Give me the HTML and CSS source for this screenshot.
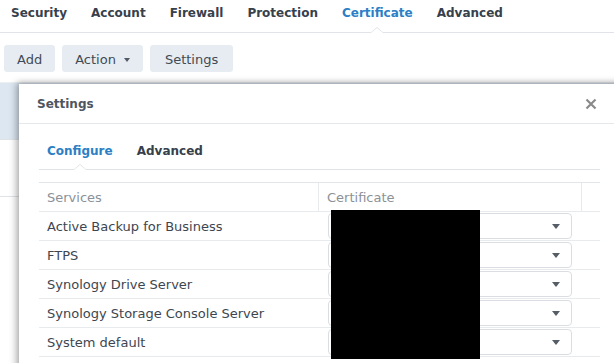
FILE: index.html
```html
<!DOCTYPE html>
<html>
<head>
<meta charset="utf-8">
<link rel="stylesheet" href="styles.css">
</head>
<body>
<div class="page">
  <nav class="tabs">
    <span class="tab">Security</span>
    <span class="tab">Account</span>
    <span class="tab">Firewall</span>
    <span class="tab">Protection</span>
    <span class="tab active">Certificate</span>
    <span class="tab">Advanced</span>
  </nav>
  <div class="toolbar">
    <button class="btn">Add</button>
    <button class="btn">Action <span class="caret"></span></button>
    <button class="btn">Settings</button>
  </div>
  <div class="grid">
    <div class="grid-row selected"></div>
    <div class="grid-row"></div>
  </div>

  <div class="dialog">
    <div class="dialog-head">
      <span class="dialog-title">Settings</span>
      <span class="close">
        <svg width="12" height="12" viewBox="0 0 12 12"><path d="M1.5 1.5 L10.5 10.5 M10.5 1.5 L1.5 10.5" stroke="#8a8a8a" stroke-width="2.2" fill="none"/></svg>
      </span>
    </div>
    <div class="dialog-body">
      <nav class="subtabs">
        <span class="subtab active">Configure</span>
        <span class="subtab">Advanced</span>
      </nav>
      <div class="table">
        <div class="thead">
          <div class="th c1">Services</div>
          <div class="th c2">Certificate</div>
          <div class="th c3"></div>
        </div>
        <div class="tr"><div class="td c1">Active Backup for Business</div><div class="td c2"><div class="select"><span class="arrow"></span></div></div></div>
        <div class="tr"><div class="td c1">FTPS</div><div class="td c2"><div class="select"><span class="arrow"></span></div></div></div>
        <div class="tr"><div class="td c1">Synology Drive Server</div><div class="td c2"><div class="select"><span class="arrow"></span></div></div></div>
        <div class="tr"><div class="td c1">Synology Storage Console Server</div><div class="td c2"><div class="select"><span class="arrow"></span></div></div></div>
        <div class="tr"><div class="td c1">System default</div><div class="td c2"><div class="select"><span class="arrow"></span></div></div></div>
      </div>
      <div class="redact"></div>
    </div>
  </div>
</div>
</body>
</html>
```
FILE: styles.css
```css
* { box-sizing: border-box; }
html, body { margin: 0; padding: 0; background: #fff; }
body {
  font-family: "DejaVu Sans", Verdana, sans-serif;
  font-size: 13px;
  color: #414b55;
  width: 614px;
  height: 363px;
  overflow: hidden;
}
.page { position: relative; width: 614px; height: 363px; overflow: hidden; }

.tabs {
  display: flex;
  height: 33px;
  padding-left: 11px;
  border-bottom: 1px solid #e0e4e8;
  align-items: flex-start;
  padding-top: 6px;
}
.tab {
  position: relative;
  font-weight: bold;
  font-size: 12px;
  margin-right: 24px;
  color: #36414c;
  line-height: 15px;
  height: 26px;
}
.tab.active { color: #2c7fc5; }
.tab.active::before,
.subtab.active::before {
  content: "";
  position: absolute;
  left: 50%;
  bottom: -1px;
  margin-left: -7px;
  border-left: 7px solid transparent;
  border-right: 7px solid transparent;
  border-bottom: 6px solid #e0e4e8;
}
.tab.active::after,
.subtab.active::after {
  content: "";
  position: absolute;
  left: 50%;
  bottom: -1px;
  margin-left: -6px;
  border-left: 6px solid transparent;
  border-right: 6px solid transparent;
  border-bottom: 5px solid #fff;
}

.toolbar {
  display: flex;
  gap: 7px;
  padding: 12px 0 0 4px;
}
.btn {
  font-family: inherit;
  font-size: 13px;
  color: #414b55;
  background: #e7ecf2;
  border: none;
  border-radius: 3px;
  height: 27px;
  padding: 1px 13px 0;
  display: flex;
  align-items: center;
  gap: 8px;
}
.btn:last-child { padding: 1px 15px 0; }
.caret {
  display: inline-block;
  border-left: 3.5px solid transparent;
  border-right: 3.5px solid transparent;
  border-top: 4px solid #505a64;
  margin-top: 1px;
}

.grid { margin-top: 10px; border-top: 1px solid #eceff2; }
.grid-row { height: 57px; border-bottom: 1px solid #dfe3e7; }
.grid-row.selected { background: #dce7f2; height: 57px; }

.dialog {
  position: absolute;
  left: 19px;
  top: 84px;
  width: 610px;
  height: 300px;
  background: #fff;
  box-shadow: -3px -1px 7px rgba(0,0,0,0.28), 0 -2px 5px rgba(0,0,0,0.1);
}
.dialog-head {
  height: 40px;
  border-bottom: 1px solid #e6e9ec;
  display: flex;
  align-items: center;
  justify-content: space-between;
  padding: 0 32px 0 18px;
}
.dialog-title { font-weight: bold; font-size: 12px; color: #4d565f; }
.close { display: flex; width: 12px; height: 12px; }

.dialog-body { position: relative; padding: 0 14px 0 20px; }
.subtabs {
  display: flex;
  height: 46px;
  padding: 20px 0 0 8px;
  border-bottom: 1px solid #e0e4e8;
  width: 561px;
}
.subtab {
  position: relative;
  font-weight: bold;
  font-size: 12px;
  color: #36414c;
  margin-right: 24px;
  line-height: 15px;
  height: 25px;
}
.subtab.active { color: #2c7fc5; }

.table { margin-top: 12px; width: 561px; border-top: 1px solid #e3e6e9; }
.thead { display: flex; height: 29px; border-bottom: 1px solid #e8ebee; }
.th {
  color: #8b9198;
  display: flex;
  align-items: center;
  padding-left: 8px;
  font-size: 13px;
}
.th.c1 { width: 280px; border-right: 1px solid #e8ebee; }
.th.c2 { width: 263px; border-right: 1px solid #e8ebee; }
.th.c3 { flex: 1; }
.tr { display: flex; height: 29px; border-bottom: 1px solid #e8ebee; align-items: center; }
.td { font-size: 13px; color: #3d4650; }
.td.c1 { width: 281px; padding-left: 8px; }
.td.c2 { width: 253px; padding-left: 8px; }
.select {
  position: relative;
  width: 244px;
  height: 26px;
  border: 1px solid #dadee3;
  border-radius: 4px;
}
.arrow {
  position: absolute;
  right: 11px;
  top: 10px;
  border-left: 4px solid transparent;
  border-right: 4px solid transparent;
  border-top: 5px solid #555d66;
}
.redact {
  position: absolute;
  left: 312px;
  top: 86px;
  width: 149px;
  height: 149px;
  background: #000;
}
```
